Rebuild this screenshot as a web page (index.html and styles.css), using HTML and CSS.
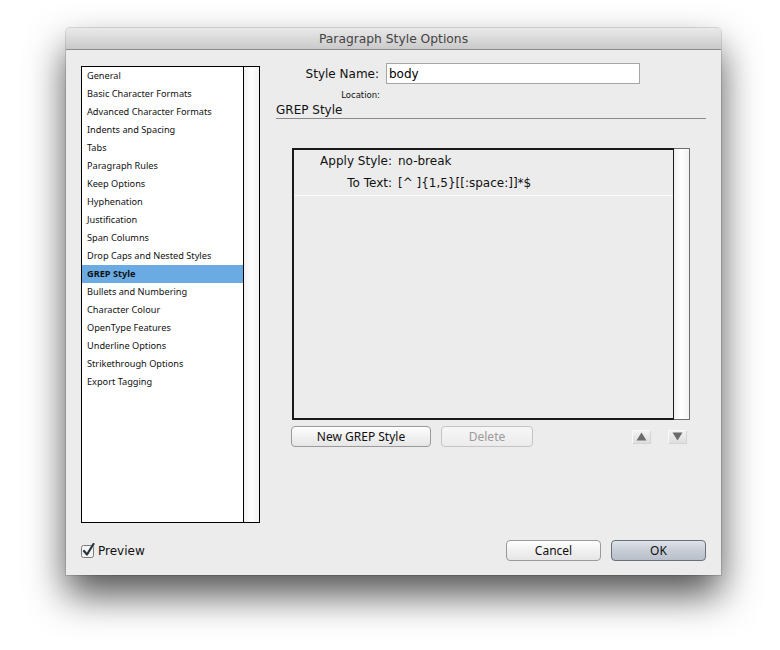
FILE: index.html
```html
<!DOCTYPE html>
<html lang="en">
<head>
    <meta charset="UTF-8">
    <title>Paragraph Style Options</title>
    <link rel="stylesheet" href="styles.css">
</head>
<body>

  <div class="desktop">
    <div class="dialog">
        <div class="titlebar">Paragraph Style Options</div>

        <div class="main">
            <div class="sidebar">
                <ul class="category-list">
                    <li>General</li>
                    <li>Basic Character Formats</li>
                    <li>Advanced Character Formats</li>
                    <li>Indents and Spacing</li>
                    <li>Tabs</li>
                    <li>Paragraph Rules</li>
                    <li>Keep Options</li>
                    <li>Hyphenation</li>
                    <li>Justification</li>
                    <li>Span Columns</li>
                    <li>Drop Caps and Nested Styles</li>
                    <li class="selected">GREP Style</li>
                    <li>Bullets and Numbering</li>
                    <li>Character Colour</li>
                    <li>OpenType Features</li>
                    <li>Underline Options</li>
                    <li>Strikethrough Options</li>
                    <li>Export Tagging</li>
                </ul>
                <div class="scrollbar"></div>
            </div>

            <div class="pane">
                <div class="name-row">
                    <label for="style-name">Style Name:</label>
                    <input type="text" id="style-name" value="body">
                </div>
                <div class="location-row">Location:</div>
                <h3 class="section-title">GREP Style</h3>

                <div class="grep-box">
                    <div class="grep-list">
                        <div class="grep-entry">
                            <div class="grep-line">
                                <span class="grep-label">Apply Style:</span>
                                <span class="grep-value">no-break</span>
                            </div>
                            <div class="grep-line">
                                <span class="grep-label">To Text:</span>
                                <span class="grep-value">[^ ]{1,5}[[:space:]]*$</span>
                            </div>
                        </div>
                    </div>
                    <div class="grep-scroll"></div>
                </div>

                <div class="grep-actions">
                    <button class="btn new-btn">New GREP Style</button>
                    <button class="btn delete-btn" disabled>Delete</button>
                    <span class="spacer"></span>
                    <button class="arrow-btn up-btn">
                        <svg width="11" height="9" viewBox="0 0 11 9"><path d="M5.5 0.5 L10.5 8.5 L0.5 8.5 Z" fill="#6b6b6b"/></svg>
                    </button>
                    <button class="arrow-btn down-btn">
                        <svg width="11" height="9" viewBox="0 0 11 9"><path d="M0.5 0.5 L10.5 0.5 L5.5 8.5 Z" fill="#6b6b6b"/></svg>
                    </button>
                </div>
            </div>
        </div>

        <div class="footer">
            <label class="preview">
                <svg class="checkbox" width="14" height="15" viewBox="0 0 14 15">
                    <rect x="0.5" y="2.5" width="12" height="12" rx="2" fill="#f4f4f4" stroke="#7a7a7a"/>
                    <path d="M3 8 L6 11.5 L12.5 1" fill="none" stroke="#2a3340" stroke-width="2.2" stroke-linecap="round" stroke-linejoin="round"/>
                </svg>
                Preview
            </label>
            <div class="footer-buttons">
                <button class="btn cancel-btn">Cancel</button>
                <button class="btn ok-btn">OK</button>
            </div>
        </div>
    </div>
  </div>

</body>
</html>
```

FILE: styles.css
```css
html, body {
    margin: 0;
    background: #ffffff;
}
body {
    font-family: "DejaVu Sans", "Noto Sans", sans-serif;
    color: #111;
}
.desktop {
    height: 650px;
    padding: 28px 0 0 66px;
    box-sizing: border-box;
    overflow: hidden;
}
.dialog {
    width: 655px;
    height: 547px;
    background: #ececec;
    border-radius: 4px 4px 0 0;
    box-shadow: 0 20px 38px rgba(0, 0, 0, 0.68), 0 0 0 1px rgba(0, 0, 0, 0.12);
    display: flex;
    flex-direction: column;
}
.titlebar {
    height: 21px;
    line-height: 22px;
    border-bottom: 1px solid #8c8c8c;
    border-radius: 4px 4px 0 0;
    background: linear-gradient(#e9e9e9, #cacaca);
    text-align: center;
    font-size: 12.3px;
    color: #444;
}
.main {
    display: flex;
    padding: 13px 15px 0 15px;
}
.sidebar {
    width: 177px;
    height: 455px;
    margin-top: 3px;
    border: 1px solid #000;
    display: flex;
}
.category-list {
    flex: 1;
    list-style: none;
    margin: 0;
    padding: 0;
    background: #fff;
    border-right: 1px solid #000;
    font-family: "Noto Sans", "DejaVu Sans", sans-serif;
}
.category-list li {
    height: 18px;
    line-height: 18px;
    padding-left: 5px;
    font-size: 9.2px;
    color: #111;
}
.category-list li.selected {
    background: #6aabe4;
    font-weight: bold;
}
.scrollbar {
    width: 15px;
    background: linear-gradient(to right, #f0f0f0, #ffffff 50%, #f3f3f3);
}
.pane {
    width: 430px;
    margin-left: 16px;
}
.name-row {
    display: flex;
    align-items: center;
}
.name-row label {
    width: 103px;
    text-align: right;
    font-size: 12px;
}
.name-row input {
    width: 254px;
    height: 21px;
    box-sizing: border-box;
    margin-left: 7px;
    border: 1px solid #a5a5a5;
    padding: 0 2px;
    font-family: inherit;
    font-size: 12px;
    color: #000;
}
.location-row {
    width: 104px;
    text-align: right;
    font-size: 8.5px;
    margin-top: 5px;
    height: 12px;
    line-height: 12px;
}
.section-title {
    margin: 3px 0 0 0;
    font-weight: normal;
    font-size: 12px;
    height: 14px;
    line-height: 13px;
    border-bottom: 1px solid #8a8a8a;
}
.grep-box {
    display: flex;
    width: 398px;
    height: 272px;
    margin: 29px 0 0 16px;
}
.grep-list {
    flex: 1;
    border: 2px solid #1a1a1a;
    border-right-width: 1px;
    background: #ececec;
}
.grep-entry {
    height: 44px;
    padding-top: 1px;
    border-bottom: 1px solid #fbfbfb;
}
.grep-line {
    display: flex;
    height: 22px;
    line-height: 20px;
    font-size: 12px;
}
.grep-label {
    width: 98px;
    text-align: right;
}
.grep-value {
    margin-left: 6px;
}
.grep-scroll {
    width: 15px;
    border: 1px solid #6e6e6e;
    border-left: none;
    background: linear-gradient(to right, #f0f0f0, #ffffff 50%, #f3f3f3);
}
.grep-actions {
    display: flex;
    align-items: center;
    margin-top: 6px;
    margin-left: 15px;
    width: 398px;
}
.spacer {
    flex: 1;
}
.btn {
    height: 21px;
    border: 1px solid #9a9a9a;
    border-radius: 4px;
    background: linear-gradient(#ffffff, #f1f1f1 50%, #e6e6e6);
    font-family: "Noto Sans", "DejaVu Sans", sans-serif;
    font-size: 12px;
    color: #111;
    padding: 0;
}
.new-btn {
    width: 140px;
}
.delete-btn {
    width: 92px;
    margin-left: 10px;
    border-color: #c4c4c4;
    color: #9b9b9b;
    background: linear-gradient(#f6f6f6, #ececec);
}
.arrow-btn {
    width: 19px;
    height: 14px;
    padding: 0;
    border: 1px solid #d4d4d4;
    border-top-color: #fafafa;
    border-left-color: #fafafa;
    background: linear-gradient(#f2f2f2, #dedede);
    display: flex;
    align-items: center;
    justify-content: center;
}
.up-btn {
    margin-right: 17px;
}
.down-btn {
    margin-right: 2px;
}
.footer {
    display: flex;
    justify-content: space-between;
    align-items: center;
    padding: 17px 15px 14px 15px;
}
.preview {
    display: flex;
    align-items: center;
    font-size: 12px;
    gap: 3px;
}
.footer-buttons {
    display: flex;
    gap: 10px;
}
.cancel-btn, .ok-btn {
    width: 95px;
}
.ok-btn {
    border-color: #6a6f7a;
    background: linear-gradient(#dfe3ea, #c8cdd6 50%, #b9bfca);
}
```
